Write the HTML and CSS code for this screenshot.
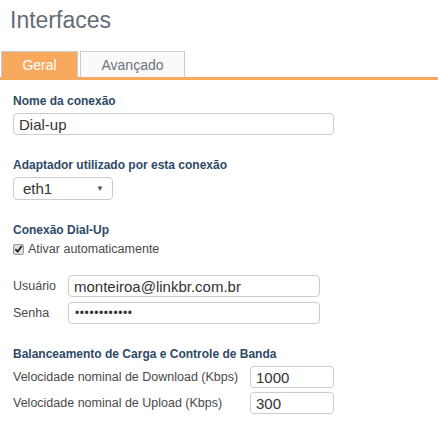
FILE: index.html
```html
<!DOCTYPE html>
<html>
<head>
  <title>Interfaces</title>
  <link rel="stylesheet" href="styles.css">
</head>
<body>
  <h1>Interfaces</h1>
  <div class="tabs">
    <div class="tab active">Geral</div>
    <div class="tab">Avançado</div>
  </div>
  <div class="content">
    <div class="group">
      <label class="title" for="nome">Nome da conexão</label>
      <input type="text" id="nome" class="wide" value="Dial-up">
    </div>

    <div class="group">
      <label class="title">Adaptador utilizado por esta conexão</label>
      <div class="select">
        <span>eth1</span>
        <span class="arrow">&#9660;</span>
      </div>
    </div>

    <div class="group">
      <div class="title">Conexão Dial-Up</div>
      <label class="check">
        <span class="box">
          <svg width="10" height="10" viewBox="0 0 10 10"><path d="M1.5 5.2 L4 7.8 L8.6 1.6" fill="none" stroke="#222" stroke-width="2"/></svg>
        </span>
        Ativar automaticamente
      </label>
      <div class="row login">
        <label for="user">Usuário</label>
        <input type="text" id="user" value="monteiroa@linkbr.com.br">
      </div>
      <div class="row login">
        <label for="pass">Senha</label>
        <input type="password" id="pass" class="pass" value="123456789012">
      </div>
    </div>

    <div class="group">
      <div class="title">Balanceamento de Carga e Controle de Banda</div>
      <div class="row speed">
        <label for="down">Velocidade nominal de Download (Kbps)</label>
        <input type="text" id="down" value="1000">
      </div>
      <div class="row speed">
        <label for="up">Velocidade nominal de Upload (Kbps)</label>
        <input type="text" id="up" value="300">
      </div>
    </div>
  </div>
</body>
</html>
```

FILE: styles.css
```css
body {
  margin: 0;
  font-family: "Liberation Sans", Arial, sans-serif;
  font-size: 12.5px;
  color: #4a4a4a;
  background: #fff;
}

h1 {
  margin: 0;
  padding: 7px 0 0 10px;
  height: 44px;
  box-sizing: border-box;
  font-size: 23px;
  font-weight: normal;
  color: #646c76;
}

.tabs {
  display: flex;
  gap: 2px;
  padding-left: 1px;
  margin-top: 7px;
  border-bottom: 3px solid #f8a95e;
}

.tab {
  height: 26px;
  line-height: 27px;
  text-align: center;
  font-size: 14px;
  color: #6b7480;
  background: #fafafa;
  border: 1px solid #ccc;
  border-bottom: none;
  box-sizing: border-box;
  width: 105px;
}

.tab.active {
  width: 77px;
  background: #f8a95e;
  color: #fff;
}

.content {
  padding: 14px 0 0 13px;
}

.group {
  margin-bottom: 23px;
}

.title {
  display: block;
  font-size: 12px;
  font-weight: bold;
  color: #2e4a66;
  margin-bottom: 5px;
}

input[type="text"],
input[type="password"] {
  height: 22px;
  box-sizing: border-box;
  border: 1px solid #ccc;
  border-radius: 4px;
  padding: 0 5px;
  font-family: "Liberation Sans", Arial, sans-serif;
  font-size: 15px;
  color: #333;
  outline: none;
}

input.pass {
  font-size: 12px;
  letter-spacing: 0.6px;
  padding-left: 6px;
}

input.wide {
  width: 321px;
}

.select {
  width: 100px;
  height: 23px;
  box-sizing: border-box;
  border: 1px solid #ccc;
  border-radius: 4px;
  display: flex;
  align-items: center;
  justify-content: space-between;
  padding: 0 8px 0 9px;
  font-size: 15px;
  color: #333;
}

.select .arrow {
  font-size: 8px;
  color: #555;
}

.check {
  display: flex;
  align-items: center;
  gap: 4px;
  margin-bottom: 19px;
}

.check .box {
  width: 11px;
  height: 11px;
  box-sizing: border-box;
  border: 1px solid #999;
  border-radius: 2px;
  background: #ddd;
  display: flex;
  align-items: center;
  justify-content: center;
}

.row {
  display: flex;
  align-items: center;
}

.login {
  margin-bottom: 5px;
}

.login:last-child {
  margin-bottom: 7px;
}

.login label {
  width: 55px;
}

.login input {
  width: 252px;
}

.speed {
  margin-top: 1px;
  margin-bottom: 4px;
}

.speed label {
  width: 237px;
}

.speed input {
  width: 84px;
}
```
